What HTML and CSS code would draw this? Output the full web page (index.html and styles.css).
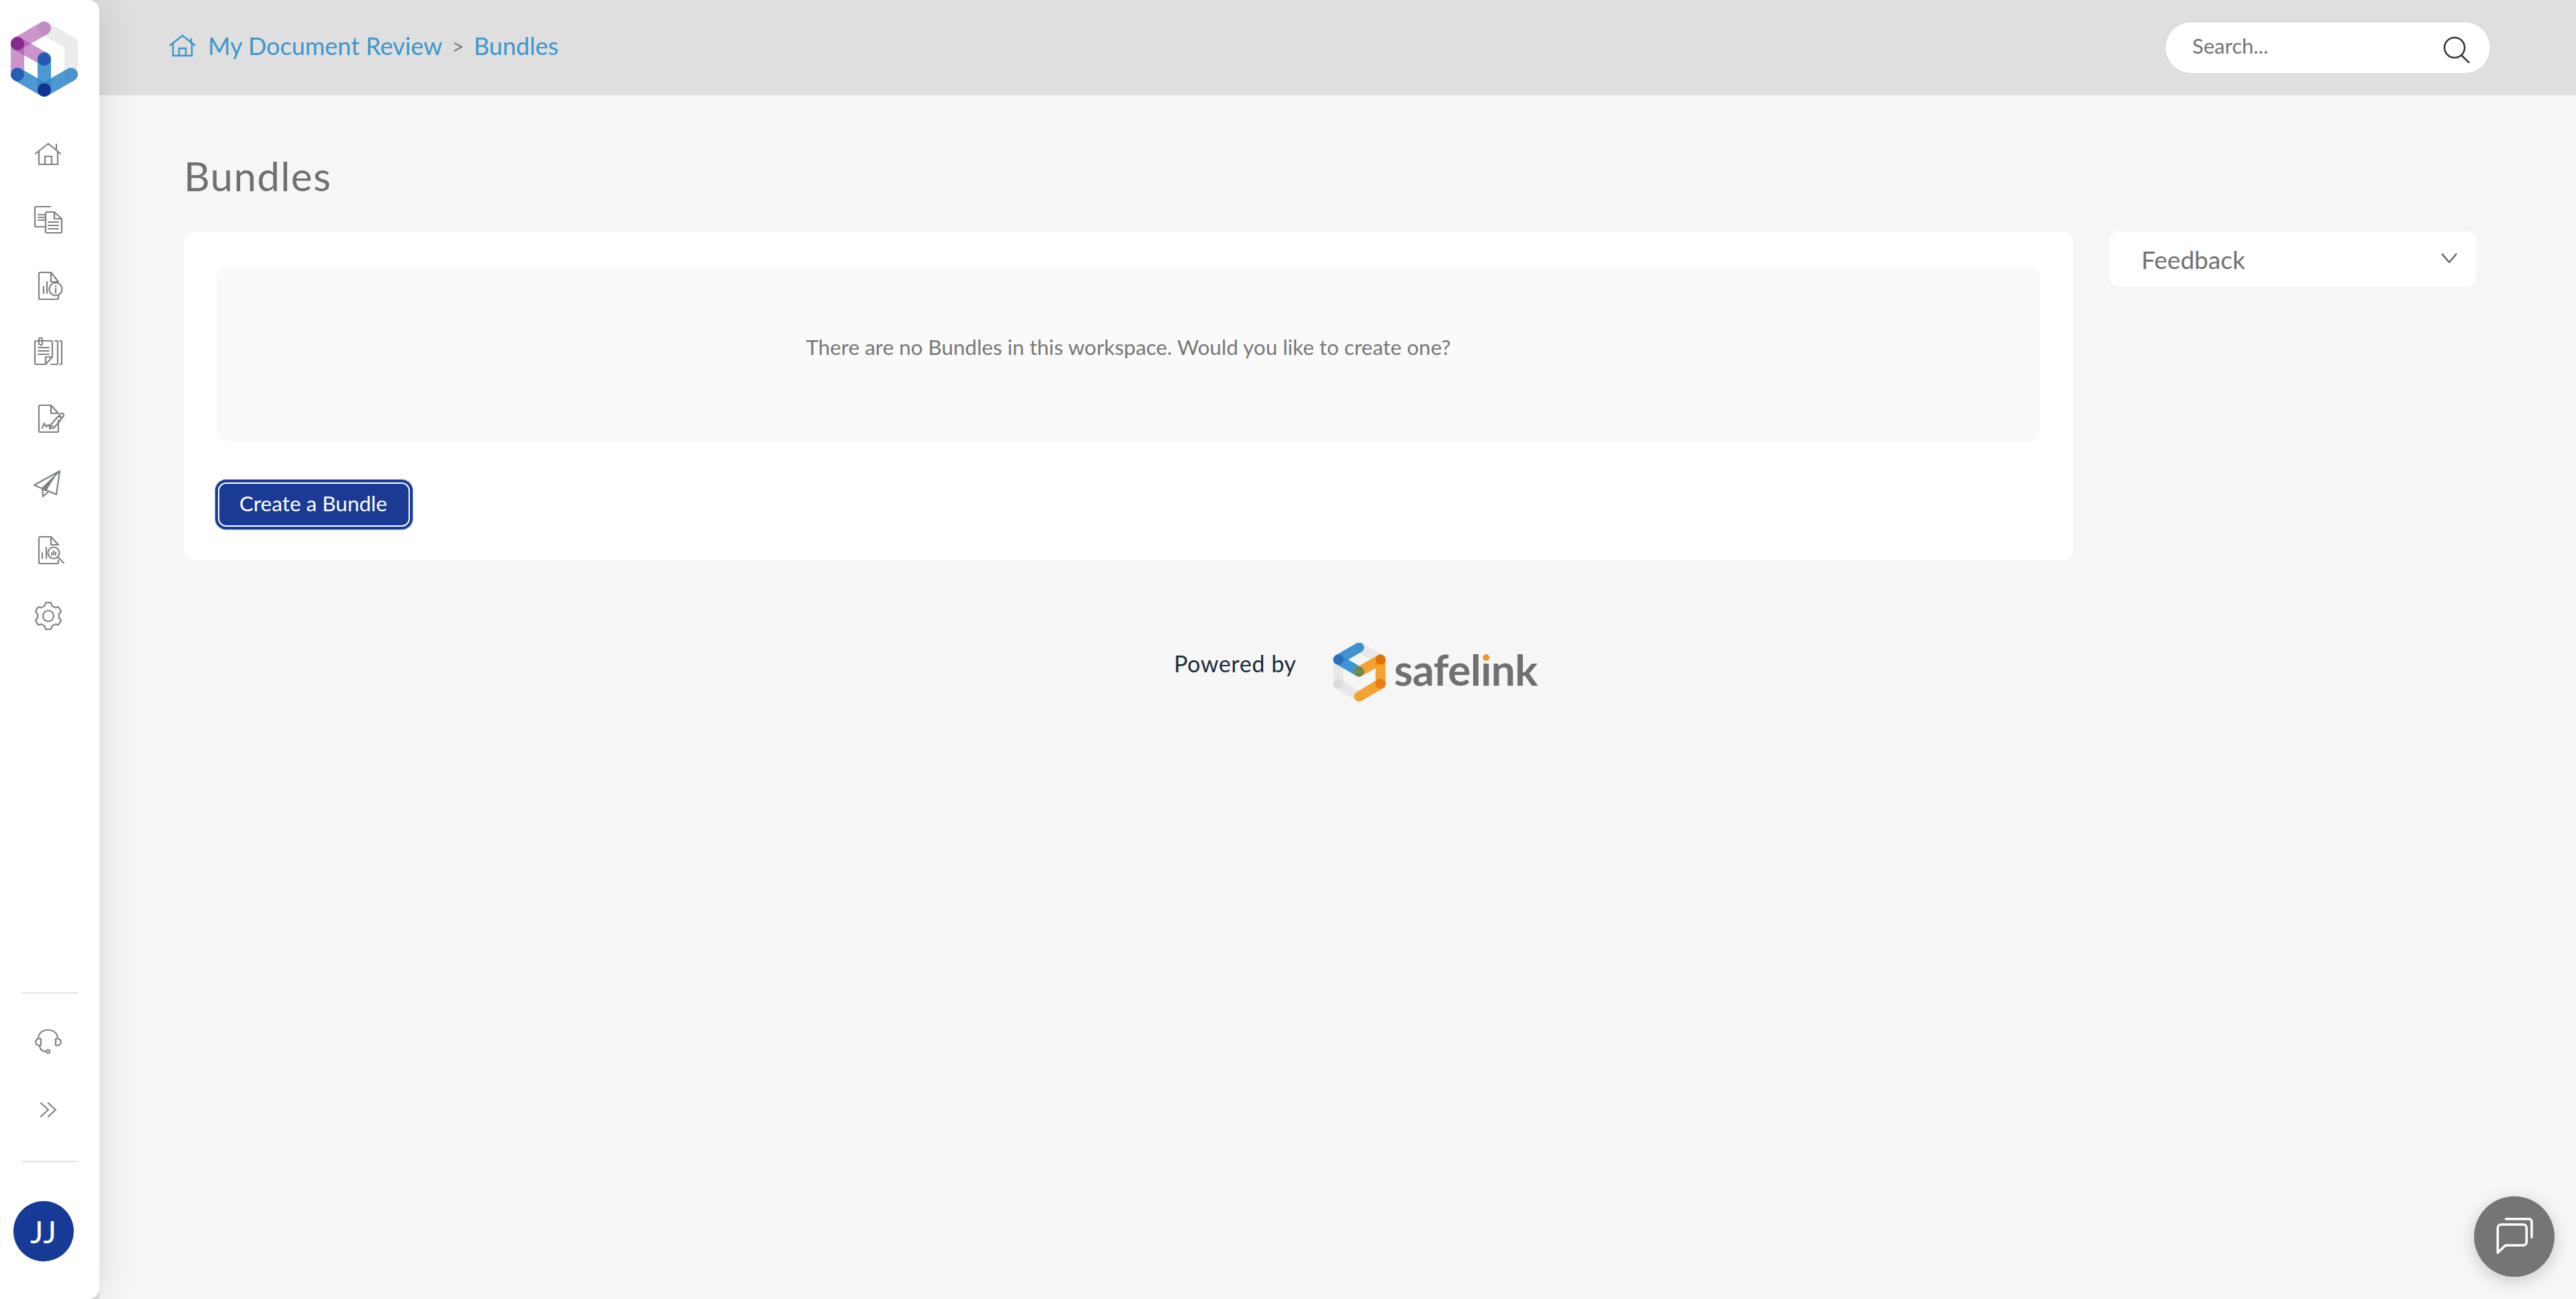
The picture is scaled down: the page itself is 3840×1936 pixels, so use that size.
FILE: index.html
```html
<!DOCTYPE html>
<html lang="en">
<head>
    <meta charset="UTF-8">
    <title>Bundles</title>
    <link rel="stylesheet" href="styles.css">
</head>
<body>
    <div class="app">
        <aside class="sidebar">
            <a class="brand" href="#">
                <svg width="100" height="112" viewBox="0 0 100 112" fill="none" stroke-width="20" stroke-linecap="round">
                    <g stroke="#dcdcdc" opacity=".55">
                        <line x1="50" y1="10" x2="90" y2="33"/>
                        <line x1="90" y1="33" x2="90" y2="79"/>
                    </g>
                    <line x1="50" y1="10" x2="10" y2="33" stroke="#a94fa8" opacity=".6"/>
                    <line x1="10" y1="33" x2="10" y2="79" stroke="#a94fa8" opacity=".6"/>
                    <line x1="10" y1="33" x2="50" y2="56" stroke="#a94fa8" opacity=".6"/>
                    <line x1="90" y1="79" x2="50" y2="102" stroke="#2f86c9" opacity=".85"/>
                    <line x1="50" y1="56" x2="50" y2="102" stroke="#2f86c9" opacity=".85"/>
                    <line x1="10" y1="79" x2="50" y2="102" stroke="#2f86c9" opacity=".85"/>
                    <circle cx="10" cy="33" r="10" fill="#7a1f82" opacity=".8"/>
                    <circle cx="50" cy="56" r="10" fill="#1c4fae" opacity=".8"/>
                    <circle cx="10" cy="79" r="10" fill="#1c4fae" opacity=".75"/>
                    <circle cx="50" cy="102" r="10" fill="#0d2a8c" opacity=".9"/>
                </svg>
            </a>

            <nav class="nav-main">
                <a class="nav-item" href="#">
                    <svg viewBox="0 0 48 48"><path d="M5 24 24 9l18 15M36 10v9M10 21v19h28V21M19 40V28h10v12"/></svg>
                </a>
                <a class="nav-item" href="#">
                    <svg viewBox="0 0 48 48"><path d="M27 5H6a2 2 0 0 0-2 2v26a2 2 0 0 0 2 2h14M9 17h11M9 21h11M9 25h11"/><path d="M22 13h11l11 10v19a2 2 0 0 1-2 2H22a2 2 0 0 1-2-2V15a2 2 0 0 1 2-2ZM33 13v10h11M24 28h15M24 33h15M24 38h15"/></svg>
                </a>
                <a class="nav-item" href="#">
                    <svg viewBox="0 0 48 48"><path d="M39 18 28 4H12a2 2 0 0 0-2 2v36a2 2 0 0 0 2 2h25a2 2 0 0 0 2-2v-3M28 4v14h11M17 35V25M22 35V18"/><circle cx="35" cy="29" r="9.500"/><path d="M35 28v7M35 24v1"/></svg>
                </a>
                <a class="nav-item" href="#">
                    <svg viewBox="0 0 48 48"><path d="M6 8a2 2 0 0 0-2 2v31a2 2 0 0 0 2 2h14l10-11V10a2 2 0 0 0-2-2ZM20 43V33a1 1 0 0 1 1-1h9M9 18h16M9 23h16M9 28h16M28 43h8a2 2 0 0 0 2-2V10a2 2 0 0 0-2-2h-2M41 8h1a2 2 0 0 1 2 2v31a2 2 0 0 1-2 2h-1"/><path d="M10 13V6a2.500 2.500 0 0 1 5 0v7a2 2 0 0 1-3 1"/></svg>
                </a>
                <a class="nav-item" href="#">
                    <svg viewBox="0 0 48 48"><path d="M39 17 28 5H12a2 2 0 0 0-2 2v36a2 2 0 0 0 2 2h25a2 2 0 0 0 2-2V27M28 5v12h11"/><path d="M15 39l3-7 3 5 3-3 2 3 5-1"/><path d="m27 35 12-14 5 4-12 14-6 1Z"/><circle cx="44" cy="20" r="3"/></svg>
                </a>
                <a class="nav-item" href="#">
                    <svg viewBox="0 0 48 48"><path d="M41 5 3 26l12 5ZM41 5l-5 35-21-9 1 12 7-6"/><path d="M32 15 15 31l5 3Z" class="solid"/></svg>
                </a>
                <a class="nav-item" href="#">
                    <svg viewBox="0 0 48 48"><g transform="translate(0 1)"><path d="M39 16 28 4H12a2 2 0 0 0-2 2v36a2 2 0 0 0 2 2h25a2 2 0 0 0 2-2v-3M28 4v12h11M15 36v-8M21 36V20"/><circle cx="32" cy="28" r="8.500"/><path d="m38 34 9 9M29 31v-3M32 31v-6M35 31v-4"/></g></svg>
                </a>
                <a class="nav-item" href="#">
                    <svg viewBox="0 0 48 48"><path d="M19.840 4.440A20 20 0 0 1 28.160 4.440L29.470 8.960A16 16 0 0 1 34.280 11.740L38.860 10.620A20 20 0 0 1 43.020 17.820L39.760 21.220A16 16 0 0 1 39.760 26.780L43.020 30.180A20 20 0 0 1 38.860 37.380L34.280 36.260A16 16 0 0 1 29.470 39.040L28.160 43.560A20 20 0 0 1 19.840 43.560L18.530 39.040A16 16 0 0 1 13.720 36.260L9.140 37.380A20 20 0 0 1 4.980 30.180L8.240 26.780A16 16 0 0 1 8.240 21.220L4.980 17.820A20 20 0 0 1 9.140 10.620L13.720 11.740A16 16 0 0 1 18.530 8.960Z"/><circle cx="24" cy="24" r="8"/></svg>
                </a>
            </nav>

            <div class="nav-bottom">
                <hr class="nav-rule">
                <a class="nav-item nav-help" href="#">
                    <svg viewBox="0 0 48 48"><path d="M9 19v-1a14.500 12 0 0 1 29 0v1M11 29c0 5 3 9 10 9"/><path d="M13 19h-2a6 5 0 0 0 0 10h2ZM35 19v10h2a6 5 0 0 0 0-10Z"/><circle cx="23.700" cy="38" r="2.500"/></svg>
                </a>
                <a class="nav-item nav-expand" href="#">
                    <svg viewBox="0 0 48 48"><path d="m13 14 11 10-11 10M24 14l11 10-11 10"/></svg>
                </a>
                <hr class="nav-rule">
                <div class="avatar">JJ</div>
            </div>
        </aside>

        <div class="main">
            <header class="topbar">
                <nav class="crumbs">
                    <svg class="crumb-home" viewBox="0 0 40 34"><path d="M1 17 20 2l19 15M33 6v8M6 13v19h28V13M15 32V21h10v11"/></svg>
                    <a href="#">My Document Review</a>
                    <span class="crumb-sep">&gt;</span>
                    <a href="#">Bundles</a>
                </nav>
                <div class="search">
                    <span class="search-text">Search...</span>
                    <svg class="search-icon" viewBox="0 0 40 40"><circle cx="17" cy="17" r="15"/><path d="m27 28 12 12"/></svg>
                </div>
            </header>

            <main class="content">
                <h1>Bundles</h1>
                <div class="columns">
                    <section class="card">
                        <div class="empty">There are no Bundles in this workspace. Would you like to create one?</div>
                        <button class="btn-primary">Create a Bundle</button>
                    </section>
                    <aside class="feedback">
                        <span>Feedback</span>
                        <svg viewBox="0 0 24 15"><path d="m1 1 11 13L23 1"/></svg>
                    </aside>
                </div>
                <footer class="powered">
                    <span class="powered-label">Powered by</span>
                    <svg class="sl-mark" width="80" height="88" viewBox="0 0 80 88" fill="none" stroke-width="15" stroke-linecap="round">
                        <g stroke="#d8d8d8" opacity=".45">
                            <line x1="39" y1="7" x2="71" y2="25"/>
                            <line x1="8" y1="25" x2="8" y2="61"/>
                            <line x1="8" y1="61" x2="39" y2="80"/>
                        </g>
                        <circle cx="8" cy="61" r="7.500" fill="#dcdcdc"/>
                        <line x1="39" y1="7" x2="8" y2="25" stroke="#2d87cf" opacity=".9"/>
                        <line x1="8" y1="25" x2="39" y2="43" stroke="#2d8bd0" opacity=".9"/>
                        <line x1="39" y1="43" x2="71" y2="25" stroke="#f39a1f" opacity=".9"/>
                        <line x1="71" y1="25" x2="71" y2="61" stroke="#f39a1f" opacity=".9"/>
                        <line x1="71" y1="61" x2="39" y2="80" stroke="#f39a1f" opacity=".9"/>
                        <circle cx="8" cy="25" r="7.500" fill="#2a6fb8"/>
                        <circle cx="71" cy="25" r="7.500" fill="#e56f0a"/>
                        <circle cx="71" cy="61" r="7.500" fill="#ef7a10"/>
                        <circle cx="39" cy="43" r="7.500" fill="#6d8a4a"/>
                    </svg>
                    <span class="sl-word">safel<span class="sl-i">i</span>nk</span>
                </footer>
            </main>
        </div>
    </div>

    <button class="chat">
        <svg viewBox="0 0 60 60"><path d="M17.500 3.700H52a4 4 0 0 1 4 4V31M5.300 54V17a5 5 0 0 1 5-5h33a5 5 0 0 1 5 5v21a5 5 0 0 1-5 5H17Z"/></svg>
    </button>
</body>
</html>
```

FILE: styles.css
```css
* {
    box-sizing: border-box;
}
html, body {
    height: 100%;
}
body {
    margin: 0;
    font-family: Lato, "Open Sans", sans-serif;
    background-color: #f6f6f6;
    color: #707070;
}
a {
    color: inherit;
    text-decoration: none;
}
.app {
    display: flex;
    height: 100vh;
    background-color: #dfdfdf;
}

/* sidebar */
.sidebar {
    width: 148px;
    flex-shrink: 0;
    display: flex;
    flex-direction: column;
    background-color: #fff;
    border-radius: 0 16px 16px 0;
    box-shadow: 0 0 60px rgba(0, 0, 0, .13);
    position: relative;
    z-index: 2;
}
.brand {
    display: block;
    padding: 32px 0 0 16px;
    height: 205px;
}
.nav-main {
    display: flex;
    flex-direction: column;
    gap: 50.4px;
}
.nav-item {
    display: block;
    width: 48px;
    height: 48px;
    margin-left: 48px;
}
.nav-item svg {
    width: 48px;
    height: 48px;
    overflow: visible;
    fill: none;
    stroke: #7b8285;
    stroke-width: 2.200;
    stroke-linecap: round;
    stroke-linejoin: round;
}
.nav-item .solid {
    fill: #7b8285;
}
.nav-bottom {
    margin-top: auto;
    display: flex;
    flex-direction: column;
    padding-bottom: 56px;
}
.nav-rule {
    width: 84px;
    height: 2px;
    margin: 0 0 0 32px;
    border: 0;
    background-color: #e3e3e3;
}
.nav-help {
    margin-top: 48px;
}
.nav-expand {
    margin-top: 53px;
    margin-bottom: 52px;
}
.avatar {
    width: 90px;
    height: 90px;
    margin: 58px 0 0 20px;
    border-radius: 50%;
    display: flex;
    align-items: center;
    justify-content: center;
    background-color: #163a96;
    color: #fff;
    font-size: 46px;
    letter-spacing: 1px;
}

/* top bar */
.main {
    flex: 1;
    display: flex;
    flex-direction: column;
    min-width: 0;
}
.topbar {
    height: 142px;
    flex-shrink: 0;
    display: flex;
    align-items: center;
    justify-content: space-between;
    padding: 0 127px 0 104px;
    background-color: #dfdfdf;
}
.crumbs {
    display: flex;
    align-items: center;
    font-size: 36px;
    color: #3d96cb;
    margin-top: -6px;
}
.crumb-home {
    width: 40px;
    height: 34px;
    margin-right: 18px;
    fill: none;
    stroke: #3d96cb;
    stroke-width: 2.500;
}
.crumb-sep {
    margin: 0 14px;
    color: #808080;
    font-size: 32px;
}
.search {
    width: 486px;
    height: 78px;
    margin-top: -1px;
    padding: 0 30px 0 40px;
    display: flex;
    align-items: center;
    justify-content: space-between;
    background-color: #fff;
    border: 1px solid #d0d0d0;
    border-radius: 39px;
}
.search-text {
    font-size: 31px;
    color: #6f7578;
    margin-top: -6px;
}
.search-icon {
    width: 40px;
    height: 40px;
    margin-top: 6px;
    fill: none;
    stroke: #333;
    stroke-width: 2.500;
}

/* content */
.content {
    flex: 1;
    padding: 0 149px 0 126px;
    background-color: #f6f6f6;
}
h1 {
    margin: 0;
    height: 203px;
    padding-top: 84px;
    font-size: 60px;
    font-weight: 400;
    line-height: 72px;
    letter-spacing: 1.400px;
    color: #707070;
}
.columns {
    display: flex;
    align-items: flex-start;
    gap: 54px;
}
.card {
    flex: 1;
    height: 490px;
    padding: 51px 49px 0;
    background-color: #fff;
    border-radius: 16px;
}
.empty {
    height: 262px;
    padding-top: 101px;
    text-align: center;
    font-size: 31.400px;
    line-height: 40px;
    background-color: #fafafa;
    border-radius: 16px;
    color: #777;
}
.btn-primary {
    display: block;
    width: 286px;
    height: 66px;
    margin: 61px 0 0 2px;
    padding: 0 2px 5px 0;
    border: 2px solid #fff;
    border-radius: 12px;
    outline: 4px solid #1a3a94;
    box-shadow: 0 0 0 5px rgba(60, 110, 200, .5);
    background-color: #1a3a94;
    color: #fff;
    font-family: inherit;
    font-size: 31.500px;
}
.feedback {
    width: 547px;
    height: 82px;
    padding: 0 28px 0 48px;
    display: flex;
    align-items: center;
    justify-content: space-between;
    background-color: #fff;
    border-radius: 14px;
    font-size: 37px;
    color: #707070;
}
.feedback svg {
    width: 24px;
    height: 15px;
    margin-top: -4px;
    fill: none;
    stroke: #666;
    stroke-width: 2.500;
}

/* footer */
.powered {
    display: flex;
    align-items: flex-start;
    margin-top: 123px;
    padding-left: 1476px;
}
.powered-label {
    width: 237px;
    padding-top: 10px;
    font-size: 34px;
    letter-spacing: .6px;
    color: #1a2b3c;
}
.sl-mark {
    flex-shrink: 0;
}
.sl-word {
    margin-left: 11px;
    font-size: 64px;
    font-weight: 700;
    line-height: 80px;
    letter-spacing: -.6px;
    color: #707070;
}
/* only the dot of the i is orange */
.sl-i {
    background: linear-gradient(#f39a1f 28px, #707070 28px);
    -webkit-background-clip: text;
    background-clip: text;
    color: transparent;
}

/* chat */
.chat {
    position: fixed;
    right: 32px;
    bottom: 33px;
    width: 120px;
    height: 120px;
    padding: 30px;
    border: 0;
    border-radius: 50%;
    background-color: #757575;
    box-shadow: 0 6px 24px rgba(0, 0, 0, .18);
}
.chat svg {
    display: block;
    width: 60px;
    height: 60px;
    fill: none;
    stroke: #fff;
    stroke-width: 3.500;
    stroke-linecap: round;
    stroke-linejoin: round;
}
```
